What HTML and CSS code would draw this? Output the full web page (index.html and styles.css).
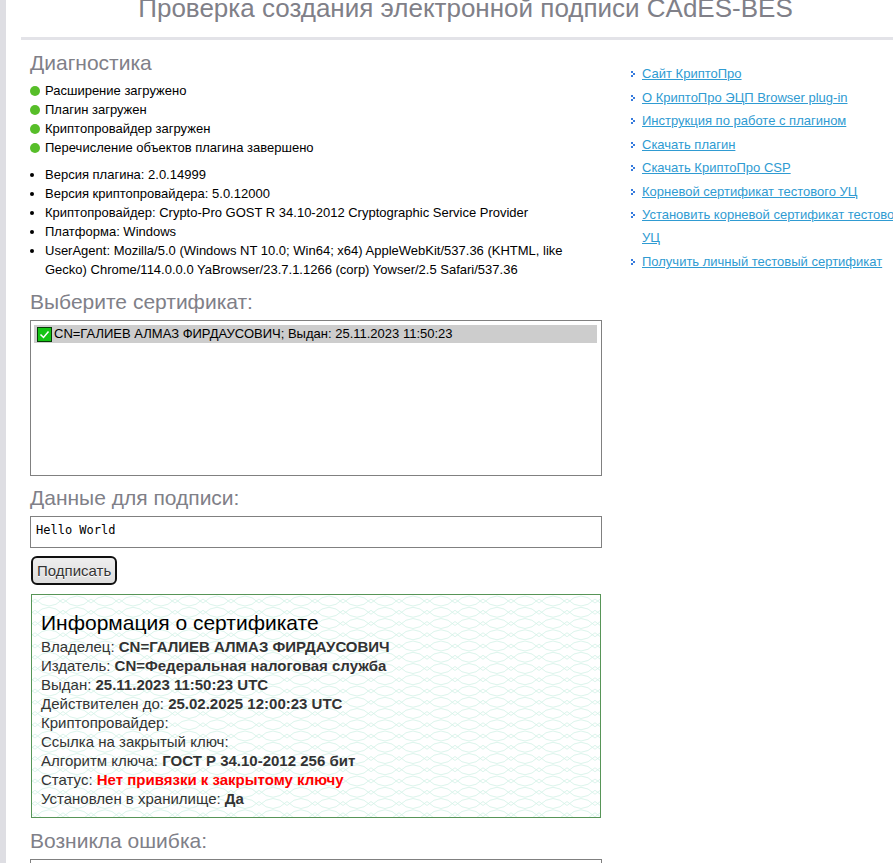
FILE: index.html
```html
<!DOCTYPE html>
<html lang="ru">
  <head>
    <meta charset="UTF-8" />
    <meta name="viewport" content="width=device-width, initial-scale=1.0" />
    <title>Проверка создания электронной подписи CAdES-BES</title>
    <link rel="stylesheet" href="styles.css">
  </head>
  <body>
    <div class="page">
      <h1>Проверка создания электронной подписи CAdES-BES</h1>

      <div class="columns">
        <main class="content">
          <h2>Диагностика</h2>
          <ul class="status-list">
            <li>Расширение загружено</li>
            <li>Плагин загружен</li>
            <li>Криптопровайдер загружен</li>
            <li>Перечисление объектов плагина завершено</li>
          </ul>
          <ul class="info-list">
            <li>Версия плагина: 2.0.14999</li>
            <li>Версия криптопровайдера: 5.0.12000</li>
            <li>Криптопровайдер: Crypto-Pro GOST R 34.10-2012 Cryptographic Service Provider</li>
            <li>Платформа: Windows</li>
            <li>UserAgent: Mozilla/5.0 (Windows NT 10.0; Win64; x64) AppleWebKit/537.36 (KHTML, like Gecko) Chrome/114.0.0.0 YaBrowser/23.7.1.1266 (corp) Yowser/2.5 Safari/537.36</li>
          </ul>

          <h2><label for="cert_list">Выберите сертификат:</label></h2>
          <select id="cert_list" class="cert-list" size="8">
            <option class="valid" selected>CN=ГАЛИЕВ АЛМАЗ ФИРДАУСОВИЧ; Выдан: 25.11.2023 11:50:23</option>
          </select>

          <h2><label for="data_to_sign">Данные для подписи:</label></h2>
          <textarea id="data_to_sign" class="data" rows="1">Hello World</textarea>
          <button type="button" class="sign">Подписать</button>

          <div class="cert-info">
            <h3>Информация о сертификате</h3>
            <p>Владелец: <b>CN=ГАЛИЕВ АЛМАЗ ФИРДАУСОВИЧ</b></p>
            <p>Издатель: <b>CN=Федеральная налоговая служба</b></p>
            <p>Выдан: <b>25.11.2023 11:50:23 UTC</b></p>
            <p>Действителен до: <b>25.02.2025 12:00:23 UTC</b></p>
            <p>Криптопровайдер:</p>
            <p>Ссылка на закрытый ключ:</p>
            <p>Алгоритм ключа: <b>ГОСТ Р 34.10-2012 256 бит</b></p>
            <p>Статус: <b class="error">Нет привязки к закрытому ключу</b></p>
            <p>Установлен в хранилище: <b>Да</b></p>
          </div>

          <h2><label for="signature">Возникла ошибка:</label></h2>
          <textarea id="signature" class="data signature" rows="8"></textarea>
        </main>

        <nav class="sidebar">
          <ul>
            <li><a href="#">Сайт КриптоПро</a></li>
            <li><a href="#">О КриптоПро ЭЦП Browser plug-in</a></li>
            <li><a href="#">Инструкция по работе с плагином</a></li>
            <li><a href="#">Скачать плагин</a></li>
            <li><a href="#">Скачать КриптоПро CSP</a></li>
            <li><a href="#">Корневой сертификат тестового УЦ</a></li>
            <li><a href="#">Установить корневой сертификат тестового УЦ</a></li>
            <li><a href="#">Получить личный тестовый сертификат</a></li>
          </ul>
        </nav>
      </div>
    </div>
  </body>
</html>
```
FILE: styles.css
```css
* {
  box-sizing: border-box;
}
body {
  margin: 0;
  height: 100vh;
  overflow: hidden;
  background: #fff;
  color: #000;
  font-family: Arial, "Liberation Sans", sans-serif;
  font-size: 13px;
  line-height: 19px;
}
.page {
  min-width: 910px;
  padding-left: 15px;
  border-left: 6px solid #dedee3;
}
h1 {
  margin: 0;
  padding-bottom: 20px;
  border-bottom: 3px solid #e3e3e8;
  color: #808088;
  font-size: 26px;
  font-weight: normal;
  line-height: 17px;
  text-align: center;
}
h2 {
  margin: 0;
  color: #808088;
  font-size: 21px;
  font-weight: normal;
  line-height: 24px;
}
ul {
  margin: 0;
  padding: 0;
  list-style: none;
}
.columns {
  display: flex;
  gap: 28px;
  padding: 11px 0 0 9px;
}
.content {
  display: flex;
  flex-direction: column;
  flex: 0 0 572px;
}
.status-list {
  margin-top: 6px;
}
.status-list li {
  display: flex;
  align-items: center;
  gap: 5px;
}
.status-list li::before {
  content: "";
  width: 10px;
  height: 10px;
  border-radius: 50%;
  background: #57be29;
}
.info-list {
  margin: 8px 0 11px;
  padding-left: 15px;
  list-style: disc;
}
.cert-list {
  height: 156px;
  margin: 6px 0 10px;
  padding: 4px 4px 4px 3px;
  border: 1px solid #808080;
  border-radius: 0;
  background: #fff;
  font: 13px/18px Arial, "Liberation Sans", sans-serif;
  outline: none;
  overflow: hidden;
}
.cert-list option {
  min-height: 18px;
  padding: 1px 0 0 20px;
  color: #000;
}
.cert-list option:checked {
  background: #cdcdcd;
}
.cert-list option.valid {
  background-image: url("data:image/svg+xml,%3Csvg xmlns='http://www.w3.org/2000/svg' width='15' height='15'%3E%3Crect x='.5' y='.5' width='14' height='14' fill='%2314c414' stroke='%23073b07'/%3E%3Cpath d='M3.5 7.5l3 3 5-6' fill='none' stroke='%23fff' stroke-width='1.5'/%3E%3C/svg%3E");
  background-repeat: no-repeat;
  background-position: 3px 2px;
}
.data {
  height: 32px;
  margin-top: 6px;
  padding: 5px;
  border: 1px solid #808080;
  font: 12px/16px "DejaVu Sans Mono", monospace;
  resize: none;
}
.data.signature {
  height: 150px;
}
.sign {
  align-self: flex-start;
  height: 29px;
  margin: 8px 0 9px 1px;
  padding: 0 4px;
  border: 2px solid #101010;
  border-radius: 6px;
  background: linear-gradient(#eee, #ddd);
  color: #333;
  font: 15px/20px Arial, "Liberation Sans", sans-serif;
  text-shadow: 0 1px 0 #fff;
}
.cert-info {
  margin: 0 1px 11px;
  padding: 15px 9px 9px;
  border: 1px solid #579557;
  background: url("data:image/svg+xml,%3Csvg xmlns='http://www.w3.org/2000/svg' width='28' height='45' fill='none' stroke='%23d2f1e6'%3E%3Cdefs%3E%3Cpath id='a' d='M-25 8Q-11-6 3 8Q17-6 31 8M-25 4Q-11 18 3 4Q17 18 31 4'/%3E%3C/defs%3E%3Cg stroke-width='.8'%3E%3Cuse href='%23a'/%3E%3Cuse href='%23a' y='11.25'/%3E%3Cuse href='%23a' y='22.5'/%3E%3Cuse href='%23a' y='33.75'/%3E%3C/g%3E%3C/svg%3E");
  color: #333;
  font-size: 15px;
}
.cert-info h3 {
  margin: 0 0 2px;
  color: #000;
  font-size: 21px;
  font-weight: normal;
  line-height: 25px;
}
.cert-info p {
  margin: 0;
}
.cert-info .error {
  color: #f00;
}
.sidebar {
  flex: 1;
  padding-top: 11px;
  line-height: 23px;
}
.sidebar li {
  padding-left: 12px;
  background: url("data:image/svg+xml,%3Csvg xmlns='http://www.w3.org/2000/svg' width='4' height='6' fill='%23377bdd'%3E%3Cpath d='M0 0h2v2H0zM2 2h2v2H2zM0 4h2v2H0z'/%3E%3C/svg%3E") no-repeat 1px 9px;
}
.sidebar li:nth-child(odd) {
  margin-bottom: 1px;
}
.sidebar a {
  color: #2f9bd2;
}
```
